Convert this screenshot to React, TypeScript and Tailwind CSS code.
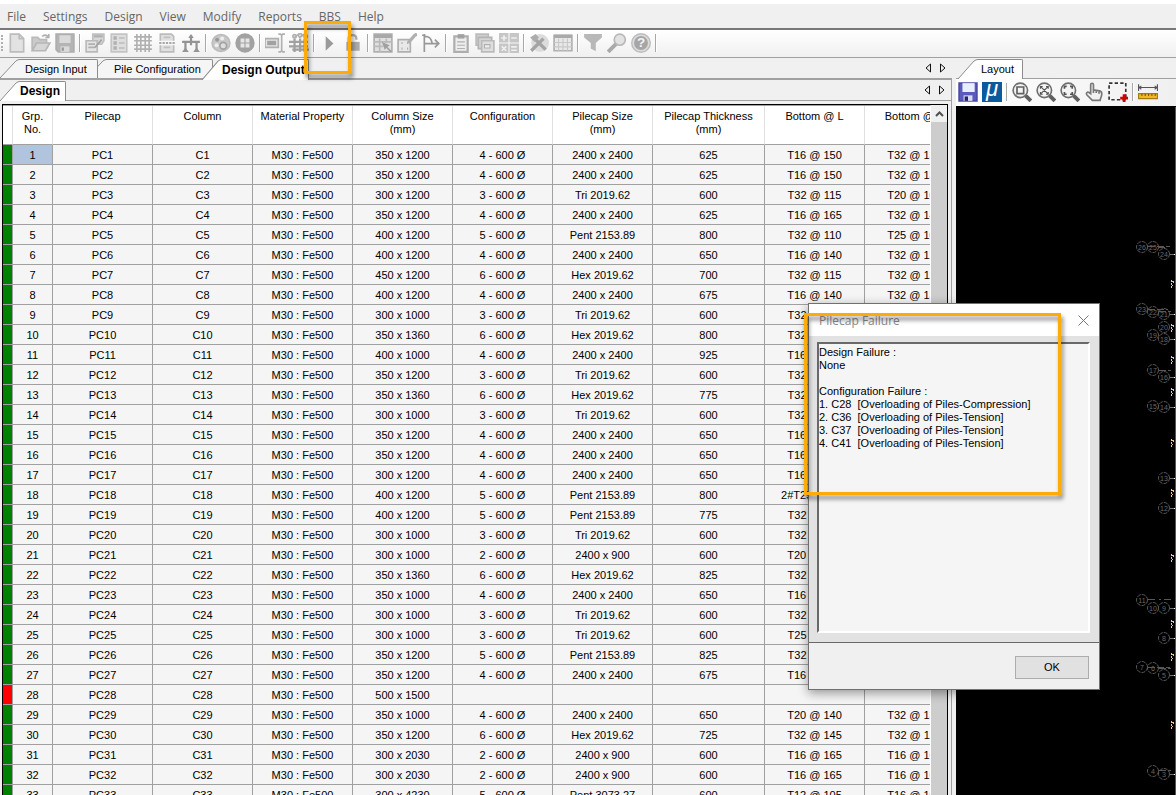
import type { ReactNode } from 'react';
import clsx from 'clsx';

const menus = ['File', 'Settings', 'Design', 'View', 'Modify', 'Reports', 'BBS', 'Help'];

// column size, configuration, pilecap size, thickness, bottom L, bottom B
const rows = [
  ['350 x 1200', '4 - 600 Ø', '2400 x 2400', '625', 'T16 @ 150', 'T32 @ 130'],
  ['350 x 1200', '4 - 600 Ø', '2400 x 2400', '625', 'T16 @ 150', 'T32 @ 130'],
  ['300 x 1200', '3 - 600 Ø', 'Tri 2019.62', '600', 'T32 @ 115', 'T20 @ 100'],
  ['350 x 1200', '4 - 600 Ø', '2400 x 2400', '625', 'T16 @ 165', 'T32 @ 140'],
  ['400 x 1200', '5 - 600 Ø', 'Pent 2153.89', '800', 'T32 @ 110', 'T25 @ 100'],
  ['400 x 1200', '4 - 600 Ø', '2400 x 2400', '650', 'T16 @ 140', 'T32 @ 120'],
  ['450 x 1200', '6 - 600 Ø', 'Hex 2019.62', '700', 'T32 @ 115', 'T32 @ 115'],
  ['400 x 1200', '4 - 600 Ø', '2400 x 2400', '675', 'T16 @ 140', 'T32 @ 130'],
  ['300 x 1000', '3 - 600 Ø', 'Tri 2019.62', '600', 'T32 @ 115', 'T20 @ 100'],
  ['350 x 1360', '6 - 600 Ø', 'Hex 2019.62', '800', 'T32 @ 110', 'T32 @ 110'],
  ['400 x 1000', '4 - 600 Ø', '2400 x 2400', '925', 'T16 @ 105', 'T32 @ 120'],
  ['350 x 1200', '3 - 600 Ø', 'Tri 2019.62', '600', 'T32 @ 115', 'T20 @ 100'],
  ['350 x 1360', '6 - 600 Ø', 'Hex 2019.62', '775', 'T32 @ 115', 'T32 @ 110'],
  ['300 x 1000', '3 - 600 Ø', 'Tri 2019.62', '600', 'T32 @ 115', 'T20 @ 100'],
  ['350 x 1200', '4 - 600 Ø', '2400 x 2400', '650', 'T16 @ 150', 'T32 @ 130'],
  ['350 x 1200', '4 - 600 Ø', '2400 x 2400', '650', 'T16 @ 150', 'T32 @ 130'],
  ['300 x 1200', '4 - 600 Ø', '2400 x 2400', '650', 'T16 @ 150', 'T32 @ 130'],
  ['400 x 1200', '5 - 600 Ø', 'Pent 2153.89', '800', '2#T25 @ 140', 'T25 @ 100'],
  ['400 x 1200', '5 - 600 Ø', 'Pent 2153.89', '775', 'T32 @ 110', 'T25 @ 100'],
  ['300 x 1000', '3 - 600 Ø', 'Tri 2019.62', '600', 'T32 @ 115', 'T20 @ 100'],
  ['300 x 1000', '2 - 600 Ø', '2400 x 900', '600', 'T20 @ 140', 'T16 @ 165'],
  ['350 x 1360', '6 - 600 Ø', 'Hex 2019.62', '825', 'T32 @ 110', 'T32 @ 110'],
  ['350 x 1000', '4 - 600 Ø', '2400 x 2400', '650', 'T16 @ 150', 'T32 @ 130'],
  ['300 x 1000', '3 - 600 Ø', 'Tri 2019.62', '600', 'T32 @ 115', 'T20 @ 100'],
  ['300 x 1000', '3 - 600 Ø', 'Tri 2019.62', '600', 'T25 @ 110', 'T20 @ 100'],
  ['350 x 1200', '5 - 600 Ø', 'Pent 2153.89', '825', 'T32 @ 110', 'T25 @ 100'],
  ['350 x 1200', '4 - 600 Ø', '2400 x 2400', '675', 'T16 @ 140', 'T32 @ 130'],
  ['500 x 1500', '', '', '', '', ''],
  ['350 x 1000', '4 - 600 Ø', '2400 x 2400', '650', 'T20 @ 140', 'T32 @ 130'],
  ['350 x 1200', '6 - 600 Ø', 'Hex 2019.62', '725', 'T32 @ 145', 'T32 @ 115'],
  ['300 x 2030', '2 - 600 Ø', '2400 x 900', '600', 'T16 @ 165', 'T16 @ 165'],
  ['300 x 2030', '2 - 600 Ø', '2400 x 900', '600', 'T16 @ 165', 'T16 @ 165'],
  ['300 x 4230', '5 - 600 Ø', 'Pent 3073.27', '600', 'T12 @ 105', 'T16 @ 100'],
];

const headers = [
  ['Grp.', 'No.'],
  ['Pilecap'],
  ['Column'],
  ['Material Property'],
  ['Column Size', '(mm)'],
  ['Configuration'],
  ['Pilecap Size', '(mm)'],
  ['Pilecap Thickness', '(mm)'],
  ['Bottom @ L'],
  ['Bottom @ B'],
];

const failureText = `Design Failure :
None

Configuration Failure :
1. C28  [Overloading of Piles-Compression]
2. C36  [Overloading of Piles-Tension]
3. C37  [Overloading of Piles-Tension]
4. C41  [Overloading of Piles-Tension]`;

// grid bubbles in the layout view
const bubbles: [number, number, string][] = [
  [186, 141, '26'], [197, 141, '25'], [208, 148, '24'],
  [186, 203, '23'], [197, 206, '22'], [208, 208, '21'],
  [208, 221, '20'], [197, 229, '19'], [208, 233, '18'],
  [197, 264, '17'], [208, 271, '16'],
  [197, 300, '15'], [208, 301, '14'],
  [208, 372, '13'], [208, 402, '12'],
  [186, 494, '11'], [197, 502, '10'], [208, 502, '9'],
  [208, 532, '8'],
  [186, 561, '7'], [197, 562, '6'], [208, 569, '5'],
  [197, 665, '4'], [208, 668, '3'],
];

const gridTicks = [148, 208, 233, 271, 301, 372, 402, 502, 532, 569, 668];
const dimMarks = [178, 222, 254, 286, 337, 387, 452, 518, 551, 619];

function Icon({ children }: { children: ReactNode }) {
  return (
    <svg width="20" height="20" viewBox="0 0 18 18" fill="none" stroke="#b0b0b0" strokeWidth="1.5" aria-hidden="true">
      {children}
    </svg>
  );
}

const tools: { name: string; icon: ReactNode }[][] = [
  [
    {
      name: 'New',
      icon: (
        <>
          <path d="M3 1h8l4 4v12H3z" fill="#e2e2e2" stroke="#bcbcbc" />
          <path d="M11 1v4h4" stroke="#bcbcbc" />
        </>
      ),
    },
    {
      name: 'Open',
      icon: (
        <>
          <path d="M1 15V4h5l2 2h6v3" fill="#cacaca" stroke="#bababa" />
          <path d="M1 16l4-7h12l-4 7z" fill="#d6d6d6" stroke="#b6b6b6" />
          <path d="M10 3c3-2 5-1 6 1m0-3v3h-3" />
        </>
      ),
    },
    {
      name: 'Save',
      icon: (
        <>
          <path d="M1 1h16v16H3l-2-2z" fill="#b4b4b4" stroke="#adadad" />
          <path d="M4 2h10v7H4z" fill="#dadada" stroke="none" />
          <path d="M5 12h8v5H5z" fill="#dadada" stroke="none" />
          <path d="M6 13h2v3H6z" fill="#999" stroke="none" />
        </>
      ),
    },
  ],
  [
    {
      name: 'Project details',
      icon: (
        <>
          <path d="M7 1h10v6l-2 3H7z" fill="#d8d8d8" stroke="#c0c0c0" />
          <path d="M8 3h8" strokeWidth="2" />
          <path d="M1 7h10v10H1z" fill="#e4e4e4" stroke="#bababa" />
          <path d="M3 10h6M3 13h6" />
          <path d="M9 13l6-7" stroke="#a2a2a2" />
        </>
      ),
    },
    {
      name: 'Options',
      icon: (
        <>
          <path d="M2 1h14v16H2z" fill="#dedede" stroke="#c4c4c4" />
          <path d="M4 4.500h3M4 9h3M4 13.500h3" strokeWidth="3" />
          <path d="M9 4.500h5M9 9h5M9 13.500h5" stroke="#bcbcbc" />
        </>
      ),
    },
    {
      name: 'Grid',
      icon: <path d="M3.500 1v16M7 1v16M11 1v16M14.500 1v16M1 3.500h16M1 7h16M1 11h16M1 14.500h16" stroke="#b0b0b0" />,
    },
    {
      name: 'Page break',
      icon: (
        <>
          <path d="M3 7V1h10l2 2v4M3 11v6h12v-6" fill="#e0e0e0" stroke="#bcbcbc" />
          <path d="M2 9h14" stroke="#8c8c8c" strokeDasharray="2 1" />
          <path d="M6 4h6M6 13h6" stroke="#c0c0c0" />
        </>
      ),
    },
    {
      name: 'Supports',
      icon: (
        <>
          <path d="M9 2v6M1 8h16M4 8v7M14 8v7M9 8v3" stroke="#949494" strokeWidth="2" />
          <path d="M6.500 4.500L9 1l2.500 3.500zM1 17l3-4 3 4zM11 17l3-4 3 4z" fill="#949494" stroke="none" />
        </>
      ),
    },
  ],
  [
    {
      name: 'Palette',
      icon: (
        <>
          <ellipse cx="9" cy="9" rx="8" ry="7.500" fill="#c8c8c8" stroke="#bcbcbc" />
          <circle cx="5.500" cy="6" r="1.800" fill="#999" stroke="none" />
          <circle cx="10" cy="5" r="1.800" fill="#eee" stroke="none" />
          <circle cx="5" cy="11" r="1.800" fill="#eee" stroke="none" />
          <circle cx="11" cy="11.500" r="3" fill="#dedede" stroke="#a2a2a2" />
        </>
      ),
    },
    {
      name: 'Pile group',
      icon: (
        <>
          <circle cx="9" cy="9" r="8.700" fill="#a2a2a2" stroke="none" />
          <path d="M5 5h3.500v3.500H5zM9.500 5H13v3.500H9.500zM5 9.500h3.500V13H5zM9.500 9.500H13V13H9.500z" fill="#e6e6e6" stroke="none" />
        </>
      ),
    },
  ],
  [
    {
      name: 'Rename',
      icon: (
        <>
          <path d="M0 5h12v8H0z" fill="#e4e4e4" />
          <path d="M2 7h8v4H2z" fill="#a2a2a2" stroke="none" />
          <path d="M12 1h2l1 1 1-1h2M15 2v14M12 17h2l1-1 1 1h2" />
        </>
      ),
    },
    {
      name: 'Reinforcement grid',
      icon: (
        <>
          <path d="M5 5v12M10 5v12M14 5v12M0 8h17M0 12h17M3 15h15" stroke="#a0a0a0" strokeWidth="2" />
          <path d="M5 3.500L9 1M9 4l5-3" />
          <circle cx="5" cy="3" r="1.500" />
          <circle cx="10" cy="2" r="1.500" />
          <circle cx="15" cy="3" r="1.500" />
        </>
      ),
    },
  ],
  [
    { name: 'Run', icon: <path d="M6 3v13l7-6.500z" fill="#9a9a9a" stroke="none" /> },
    {
      name: 'Unlock',
      icon: (
        <>
          <path d="M5 9V5c0-4 7-4 7 0v1" strokeWidth="2" />
          <path d="M3 8h12v8H3z" fill="#aaa" stroke="none" />
        </>
      ),
    },
  ],
  [
    {
      name: 'Design table',
      icon: (
        <>
          <path d="M1 1h16v16H1z" fill="#e0e0e0" />
          <path d="M1 3h16" stroke="#a8a8a8" strokeWidth="3" />
          <path d="M1 8h16M1 12h8M6 5v12M12 5v4" stroke="#bababa" />
          <path d="M8 8l7 3-2 1.500 4 4-1 1-4-4L10.500 15z" fill="#a0a0a0" stroke="none" />
        </>
      ),
    },
    {
      name: 'Edit pilecap',
      icon: (
        <>
          <path d="M1 6h11v11H1z" fill="#e8e8e8" />
          <path d="M4 9h1M9 9h1M4 14h1M9 14h1" strokeWidth="2" />
          <path d="M10 9l6-7 2-1" strokeWidth="3" />
        </>
      ),
    },
    { name: 'Move forces', icon: <path d="M3 1v16M1 2h3M3 9.500h13M12.500 6l3.500 3.500-3.500 3.500M3 3c5 0 6 2 7 6" stroke="#989898" /> },
  ],
  [
    {
      name: 'Clipboard',
      icon: (
        <>
          <path d="M3 3h12v14H3z" fill="#ededed" stroke="#aeaeae" strokeWidth="2" />
          <path d="M6 1h6v4H6z" fill="#a2a2a2" stroke="none" />
          <path d="M5.500 8h7M5.500 11h7M5.500 14h7" strokeWidth="1" />
        </>
      ),
    },
    {
      name: 'Copy',
      icon: (
        <>
          <path d="M1 1h11v10H1z" fill="#cecece" stroke="#bcbcbc" />
          <path d="M3 4h12v10H3z" fill="#d4d4d4" stroke="#b4b4b4" />
          <path d="M6 7h11v10H6z" fill="#dedede" stroke="#bababa" />
          <path d="M8.500 10.500h5v3h-5z" fill="#eee" strokeWidth="1" />
        </>
      ),
    },
    {
      name: 'Calculator',
      icon: (
        <>
          <path d="M0 0h8.500v8.500H0zM9.500 0H18v8.500H9.500zM0 9.500h8.500V18H0zM9.500 9.500H18V18H9.500z" fill="#c6c6c6" stroke="none" />
          <path d="M2 4.500h5M4.500 2v5M11 4.500h5M2.500 12l4 4M6.500 12l-4 4M11 12.500h5M11 15.500h5" stroke="#f0f0f0" />
        </>
      ),
    },
  ],
  [
    {
      name: 'Tools',
      icon: (
        <>
          <circle cx="10" cy="9" r="8" fill="#dcdcdc" stroke="none" />
          <path d="M2 16L13 5M5 5l10 10" stroke="#a4a4a4" strokeWidth="3" />
          <path d="M1 4l5-3 3 3-4 4z" fill="#acacac" stroke="none" />
        </>
      ),
    },
    {
      name: 'Table',
      icon: (
        <>
          <path d="M1 2h16v14H1z" fill="#e8e8e8" />
          <path d="M1 3h16" stroke="#aaa" strokeWidth="3" />
          <path d="M5 5v11M9 5v11M13 5v11M1 8.500h16M1 12.500h16" stroke="#c8c8c8" strokeWidth="1" />
        </>
      ),
    },
  ],
  [
    { name: 'Filter', icon: <path d="M1 1h16v3l-5.500 5v7.500L7 14V9L1 4z" fill="#b8b8b8" stroke="none" /> },
    {
      name: 'Find',
      icon: (
        <>
          <path d="M1 17l7-7" stroke="#aaa" strokeWidth="3.500" />
          <circle cx="11.500" cy="6" r="5" fill="#e2e2e2" stroke="#b8b8b8" />
        </>
      ),
    },
    {
      name: 'Help',
      icon: (
        <>
          <circle cx="9" cy="9" r="8" fill="#a6a6a6" stroke="#bcbcbc" strokeWidth="2" />
          <circle cx="9" cy="9" r="7" stroke="#dcdcdc" />
          <text x="9" y="13" textAnchor="middle" fontSize="12" fontWeight="bold" fill="#f4f4f4" stroke="none">?</text>
        </>
      ),
    },
  ],
];

const lens = (
  <>
    <path d="M12 12l5 5" stroke="#606060" strokeWidth="3.500" />
    <circle cx="7.500" cy="7.500" r="6.500" fill="#f4f4f4" stroke="#707070" />
  </>
);

const viewTools: { name: string; icon: ReactNode }[][] = [
  [
    {
      name: 'Save layout',
      icon: (
        <>
          <path d="M1 1h16v16H1z" fill="#5a5abc" stroke="#4a4aa8" />
          <path d="M4 1h11v8H4z" fill="#e8eefc" stroke="none" />
          <path d="M5 12h8v5H5z" fill="#dadaf0" stroke="none" />
          <path d="M6 13h3v4H6z" fill="#24246c" stroke="none" />
        </>
      ),
    },
    {
      name: 'MicroStation',
      icon: (
        <>
          <path d="M0 0h18v18H0z" fill="#0c5a9e" stroke="none" />
          <text x="9" y="13" textAnchor="middle" fontSize="20" fontStyle="italic" fill="#fff" stroke="none">μ</text>
        </>
      ),
    },
  ],
  [
    {
      name: 'Zoom window',
      icon: (
        <>
          {lens}
          <path d="M4.500 4.500h6v6h-6z" stroke="#606060" />
        </>
      ),
    },
    {
      name: 'Zoom extents',
      icon: (
        <>
          {lens}
          <path d="M4 4l7 7M11 4l-7 7M4 6V4h2M9 4h2v2M4 9v2h2M11 9v2H9" stroke="#555" strokeWidth="1" />
        </>
      ),
    },
    {
      name: 'Zoom dynamic',
      icon: (
        <>
          {lens}
          <path d="M4 6V4h2M9 4h2v2M4 9v2h2M11 9v2H9" stroke="#555" />
        </>
      ),
    },
    {
      name: 'Pan',
      icon: (
        <path
          d="M6 10.500V2.500c0-1.800 2.500-1.800 2.500 0V7l5.500 1c1.500.3 2 1 2 2.500 0 2.500-1 3.500-1.500 6h-7L2.500 11.500C1.500 10 3 8.500 4.500 9.500zM8.500 7v3M11 7.500V10M13.500 8v2.500"
          fill="#f2f2f2"
          stroke="#787878"
        />
      ),
    },
    {
      name: 'Select area',
      icon: (
        <>
          <path d="M1 1h15v15H1z" stroke="#333" strokeDasharray="3 2" />
          <path d="M14.500 11v7M11 14.500h7" stroke="#d40000" strokeWidth="2.500" />
        </>
      ),
    },
  ],
  [
    {
      name: 'Measure',
      icon: (
        <>
          <path d="M.5 2v6M17.500 2v6M1 5h16M3 3.500L1 5l2 1.500M15 3.500L17 5l-2 1.500" stroke="#555" strokeWidth="1" />
          <path d="M.5 10.500h17v4.500H.5z" fill="#f2b824" stroke="#a87a10" strokeWidth="1" />
          <path d="M3.500 10.500v2M6.500 10.500v2M9.500 10.500v2M12.500 10.500v2M15.500 10.500v2" stroke="#7a5808" strokeWidth="1" />
        </>
      ),
    },
  ],
];

function ToolGroups({ groups }: { groups: { name: string; icon: ReactNode }[][] }) {
  return groups.map((group, g) => (
    <div key={g} className="flex items-center">
      {group.map((t) => (
        <button key={t.name} type="button" aria-label={t.name} className="flex h-6 w-6 items-center justify-center">
          <Icon>{t.icon}</Icon>
        </button>
      ))}
      {(groups === tools || g < groups.length - 1) && (
        <span className="mx-[2px] h-[18px] w-[2px] border-l border-[#a8a8a8] bg-white" />
      )}
    </div>
  ));
}

function Tab({ label, active, className }: { label: string; active?: boolean; className?: string }) {
  return (
    <button type="button" role="tab" aria-selected={!!active} className={clsx('relative flex shrink-0', className)}>
      <svg className="h-full w-5" viewBox="0 0 20 20" preserveAspectRatio="none" aria-hidden="true">
        <path d="M0 20L16 2Q18 .5 20 .5V20z" fill={active ? '#fff' : '#f5f5f5'} />
        <path d="M0 20L16 2Q18 .5 20 .5" fill="none" stroke="#8c8c8c" />
      </svg>
      <span
        className={clsx(
          'flex h-full flex-1 items-center rounded-tr-[2px] border-t border-r border-[#8c8c8c]',
          active ? 'bg-white' : 'bg-[#f5f5f5]',
        )}
      >
        {label}
      </span>
    </button>
  );
}

function TabArrows() {
  return (
    <div className="ml-auto flex items-center gap-1 pr-1 pb-[2px]">
      <button type="button" aria-label="Scroll tabs left">
        <svg width="10" height="10" viewBox="0 0 10 10" fill="none" stroke="#111"><path d="M6.500 1v8L2 5z" /></svg>
      </button>
      <button type="button" aria-label="Scroll tabs right">
        <svg width="10" height="10" viewBox="0 0 10 10" fill="none" stroke="#111"><path d="M2.500 1v8L7 5z" /></svg>
      </button>
    </div>
  );
}

function ResultsTable() {
  return (
    <table className="w-[962px] shrink-0 table-fixed border-separate border-spacing-0 text-center">
      <colgroup>
        <col className="w-[10px]" />
        <col className="w-[40px]" />
        <col className="w-[100px]" />
        <col className="w-[100px]" />
        <col className="w-[100px]" />
        <col className="w-[100px]" />
        <col className="w-[100px]" />
        <col className="w-[100px]" />
        <col className="w-[112px]" />
        <col className="w-[100px]" />
        <col className="w-[100px]" />
      </colgroup>
      <thead>
        <tr className="h-[39px] bg-white align-top">
          <td className="border-r border-b border-r-[#e0e0e0] border-b-[#a0a0a0]" />
          {headers.map((h) => (
            <th key={h[0]} className="border-r border-b border-r-[#e0e0e0] border-b-[#a0a0a0] pt-1 font-normal whitespace-nowrap">
              {h.map((line) => (
                <span key={line} className="block">{line}</span>
              ))}
            </th>
          ))}
        </tr>
      </thead>
      <tbody className="[&_td]:border-r [&_td]:border-b [&_td]:border-[#a0a0a0] [&_td]:pt-[2px] [&_td]:whitespace-nowrap">
        {rows.map((r, i) => (
          <tr key={i} className="h-5 bg-[#f5f5f5]">
            <td className={i === 27 ? 'bg-[#ff0000]' : 'bg-[#008000]'} />
            <td className={clsx(i === 0 && 'bg-[#b0c4de]')}>{i + 1}</td>
            <td>PC{i + 1}</td>
            <td>C{i + 1}</td>
            <td>M30 : Fe500</td>
            {r.map((cell, c) => (
              <td key={c}>{cell}</td>
            ))}
          </tr>
        ))}
      </tbody>
    </table>
  );
}

function LayoutCanvas() {
  return (
    <div className="flex min-h-0 flex-1 justify-end overflow-hidden bg-black">
      <svg className="shrink-0" width="220" height="689" viewBox="0 0 220 689" fill="none" stroke="#585858" role="img" aria-label="Pile layout">
        {bubbles.map(([x, y, n]) => (
          <g key={n}>
            <circle cx={x} cy={y} r="5.500" strokeDasharray="4 1" />
            <text x={x} y={y + 3} textAnchor="middle" fontSize="7" fill="#6a6a6a" stroke="none">{n}</text>
          </g>
        ))}
        {gridTicks.map((y) => (
          <g key={y}>
            <path d={`M214 ${y + 0.5}h5`} stroke="#777" />
            <path d={`M218 ${y + 0.5}h1`} stroke="#fff" />
          </g>
        ))}
        <path d="M192 140.500h22M203 141.500h6M192 203.500h20M203 205.500h12M203 264.500h12M192 493.500h7M203 493.500h2M208 493.500h7M192 561.500h22M203 562.500h12M203 664.500h12" strokeDasharray="7 2" />
        {dimMarks.map((y) => (
          <path key={y} d={`M215.500 ${y - 4}v9M216.500 ${y - 3}v1M217.500 ${y - 3}v3M216.500 ${y + 1}v1`} stroke="#f5c896" strokeDasharray="2 1" />
        ))}
        <path d="M219.500 1v688" stroke="#555" />
      </svg>
    </div>
  );
}

function FailureDialog() {
  return (
    <div
      role="dialog"
      aria-label="Pilecap Failure"
      className="absolute top-[303px] left-[808px] flex h-[387px] w-[292px] flex-col border border-[#707070] bg-[#e2e2e2] shadow-[0_3px_10px_rgba(0,0,0,0.4)]"
    >
      <div className="flex h-8 items-center justify-between bg-white pr-[10px] pl-[10px] font-['Open_Sans',sans-serif] text-[12px] text-[#8c8c8c]">
        <span>Pilecap Failure</span>
        <button type="button" aria-label="Close">
          <svg width="11" height="11" viewBox="0 0 11 11" stroke="#777"><path d="M.5.5l10 10M10.500.5l-10 10" /></svg>
        </button>
      </div>
      <textarea
        readOnly
        aria-label="Failure details"
        value={failureText}
        className="mr-[9px] mb-[9px] ml-2 mt-[6px] flex-1 resize-none overflow-hidden border-2 border-t-[#696969] border-r-white border-b-white border-l-[#696969] bg-[#f5f5f5] pt-[2px] leading-[13px] whitespace-pre outline-none"
      />
      <div className="flex h-[47px] items-center justify-end border-t border-[#696969] bg-[#f0f0f0] pt-[2px] pr-[10px]">
        <button type="button" className="h-[23px] w-[74px] border border-[#adadad] bg-[#e1e1e1]">OK</button>
      </div>
    </div>
  );
}

export default function App() {
  return (
    <div className="relative flex h-screen flex-col overflow-hidden bg-[#f0f0f0] pt-1 font-['Liberation_Sans',Arial,sans-serif] text-[11px] leading-[13px] text-black before:absolute before:inset-x-0 before:top-0 before:h-1 before:bg-white">
      {/* Menu bar */}
      <nav className="flex h-[26px] shrink-0 items-center gap-[17px] border-b-2 border-[#787878] pl-[7px] font-['Open_Sans',sans-serif] text-[12px] text-[#666]">
        {menus.map((m) => (
          <button key={m} type="button">{m}</button>
        ))}
      </nav>

      {/* Toolbar */}
      <div className="flex h-7 shrink-0 items-center border-b border-[#a0a0a0] bg-linear-to-b from-white to-[#f0f0f0] pb-px pl-px">
        <span className="mr-[2px] h-4 w-[2px] border-r-2 border-dotted border-[#b0b0b0]" />
        <ToolGroups groups={tools} />
      </div>

      <div className="flex min-h-0 flex-1">
        {/* Design results */}
        <main className="flex min-w-0 flex-1 flex-col">
          <div role="tablist" className="flex h-[22px] shrink-0 border-b-2 border-[#a0a0a0] pt-px">
            <Tab label="Design Input" className="z-10 w-[98px] [&>span]:pl-[5px]" />
            <Tab label="Pile Configuration" className="-ml-[11px] w-[126px] [&>span]:pl-[7px]" />
            <Tab label="Design Output" active className="z-20 -mb-[2px] -ml-[11px] w-[107px] text-[12px] font-bold" />
            <TabArrows />
          </div>
          <div className="flex min-h-0 flex-1 flex-col border-r border-[#a0a0a0]">
            <div role="tablist" className="flex h-[21px] shrink-0 border-b border-[#a0a0a0] pt-px">
              <Tab label="Design" active className="-mb-px w-[66px] text-[12px] font-bold" />
              <TabArrows />
            </div>
            <div className="mt-[3px] mr-[3px] ml-[2px] flex min-h-0 flex-1 border-t border-r border-l border-black">
              <div className="min-w-0 flex-1 overflow-hidden border-t border-r border-t-[#a0a0a0] border-r-white">
                <ResultsTable />
              </div>
              <div className="flex w-4 shrink-0 flex-col bg-[#cdcdcd]">
                <button type="button" aria-label="Scroll up" className="flex h-[17px] items-center justify-center bg-[#f0f0f0]">
                  <svg width="9" height="6" viewBox="0 0 9 6" fill="none" stroke="#505050" strokeWidth="2"><path d="M1 5l3.500-3.500L8 5" /></svg>
                </button>
              </div>
            </div>
          </div>
        </main>

        {/* Layout view */}
        <aside className="ml-1 flex w-[220px] shrink-0 flex-col">
          <div role="tablist" className="flex h-[21px] shrink-0 border-b border-[#a0a0a0] pt-px">
            <Tab label="Layout" active className="-mb-px ml-[2px] w-[65px] [&>span]:pl-[3px]" />
          </div>
          <div className="flex h-[27px] shrink-0 items-center bg-linear-to-r from-white to-[#f0f0f0] pb-[2px]">
            <ToolGroups groups={viewTools} />
          </div>
          <LayoutCanvas />
        </aside>
      </div>

      <FailureDialog />

      {/* Callout frames */}
      <div className="pointer-events-none absolute top-[21px] left-[304px] z-30 h-[53px] w-[47px] border-[3px] border-[#fcab08] drop-shadow-[2px_4px_2px_rgba(0,0,0,0.5)]" />
      <div className="pointer-events-none absolute top-[313px] left-[804px] z-30 h-[182px] w-[257px] border-[3px] border-[#fcab08] drop-shadow-[2px_4px_2px_rgba(0,0,0,0.5)]" />
    </div>
  );
}
